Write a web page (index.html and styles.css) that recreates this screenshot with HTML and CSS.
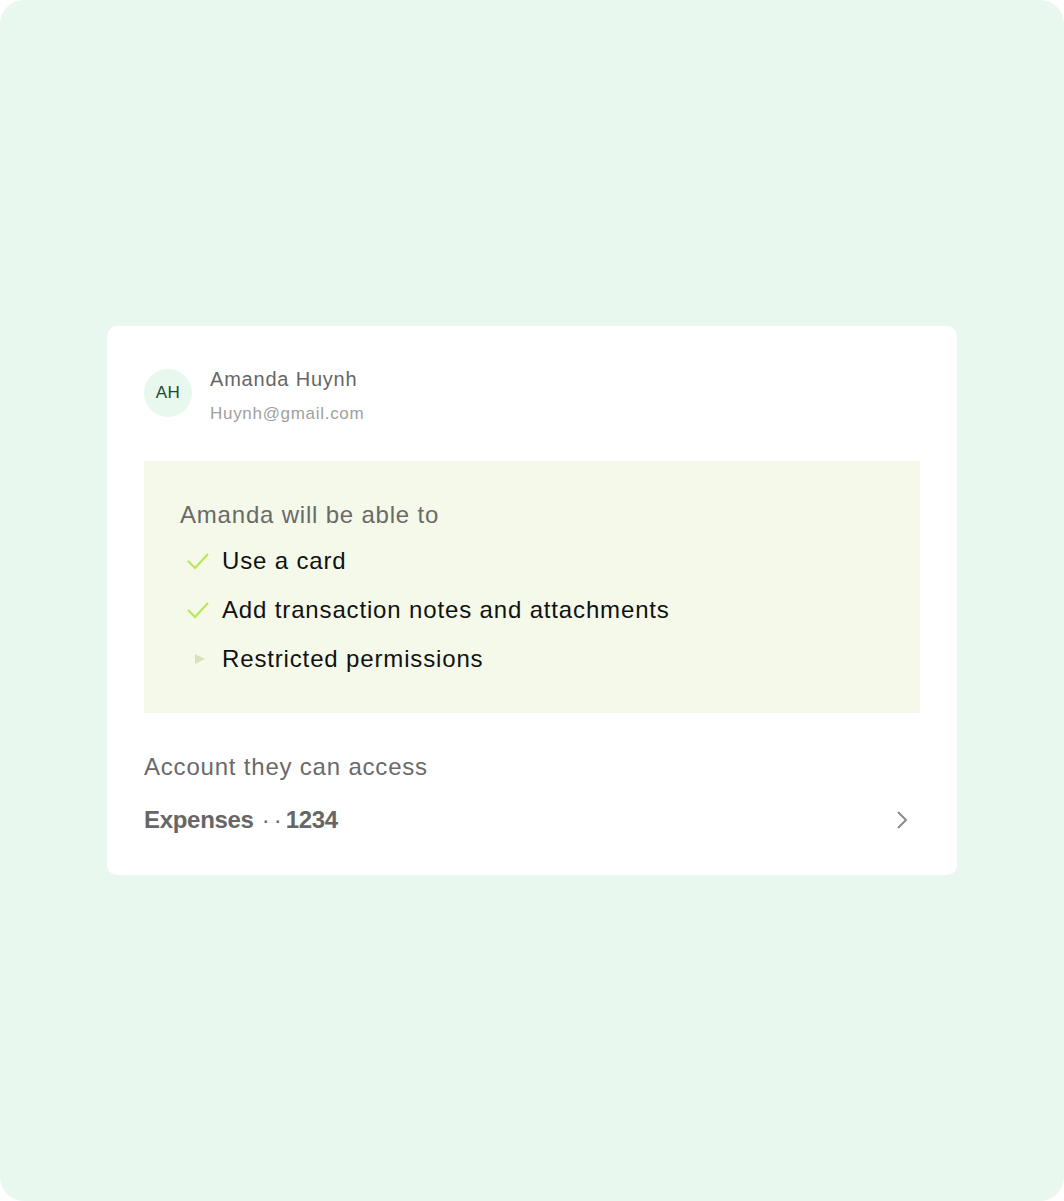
FILE: index.html
```html
<!DOCTYPE html>
<html lang="en">
<head>
    <meta charset="utf-8">
    <meta name="viewport" content="width=device-width, initial-scale=1.0">
    <title>Invite member</title>
    <link rel="stylesheet" href="styles.css">
</head>

<body>
    <main class="stage">
        <section class="card">
            <header class="person">
                <div class="avatar">AH</div>
                <div class="who">
                    <p class="name">Amanda Huynh</p>
                    <p class="email">Huynh@gmail.com</p>
                </div>
            </header>

            <div class="perms">
                <p class="perms-title">Amanda will be able to</p>
                <ul>
                    <li>
                        <svg class="icon" width="24" height="18" viewBox="0 0 24 18"><path d="M2 9 L9 16 L22 2" fill="none" stroke="#b4e84e" stroke-width="2"/></svg>
                        Use a card
                    </li>
                    <li>
                        <svg class="icon" width="24" height="18" viewBox="0 0 24 18"><path d="M2 9 L9 16 L22 2" fill="none" stroke="#b4e84e" stroke-width="2"/></svg>
                        Add transaction notes and attachments
                    </li>
                    <li>
                        <svg class="icon" width="24" height="18" viewBox="0 0 24 18"><path d="M9 4 L19 9 L9 14 Z" fill="#d6e2bd"/></svg>
                        Restricted permissions
                    </li>
                </ul>
            </div>

            <p class="label">Account they can access</p>
            <div class="account">
                <span>Expenses<span class="dots">··</span>1234</span>
                <svg width="12" height="20" viewBox="0 0 12 20"><path d="M2 2 L10 10 L2 18" fill="none" stroke="#8a8a8a" stroke-width="2"/></svg>
            </div>
        </section>
    </main>
</body>
</html>
```

FILE: styles.css
```css
* {
    box-sizing: border-box;
}

body {
    margin: 0;
    background-color: #ffffff;
    font-family: 'Liberation Sans', Arial, sans-serif;
}

.stage {
    width: 1064px;
    height: 1201px;
    background-color: #e8f8ee;
    border-radius: 24px;
    display: flex;
    align-items: center;
    justify-content: center;
}

.card {
    width: 850px;
    background-color: #ffffff;
    border-radius: 10px;
    padding: 41px 37px 41px 37px;
}

p {
    margin: 0;
}

.person {
    display: flex;
    align-items: flex-start;
    gap: 18px;
}

.avatar {
    width: 48px;
    height: 48px;
    border-radius: 50%;
    background-color: #e8f8ee;
    color: #1d4a2c;
    font-size: 17px;
    letter-spacing: 0.5px;
    display: flex;
    align-items: center;
    justify-content: center;
    margin-top: 2px;
}

.name {
    font-size: 20px;
    line-height: 24px;
    letter-spacing: 0.8px;
    color: #666666;
}

.email {
    font-size: 17px;
    line-height: 20px;
    letter-spacing: 0.7px;
    color: #a0a0a0;
    margin-top: 13px;
}

.perms {
    background-color: #f5f9ea;
    margin-top: 37px;
    padding: 40px 36px 40px 36px;
}

.perms-title {
    font-size: 24px;
    line-height: 28px;
    letter-spacing: 0.8px;
    color: #6a6a6a;
}

ul {
    list-style: none;
    margin: 0;
    padding: 0;
}

li {
    display: flex;
    align-items: center;
    gap: 12px;
    font-size: 24px;
    line-height: 28px;
    letter-spacing: 0.85px;
    color: #111111;
    margin-top: 21px;
    padding-left: 6px;
}

.perms-title + ul li:first-child {
    margin-top: 18px;
}

.label {
    font-size: 24px;
    line-height: 28px;
    letter-spacing: 0.8px;
    color: #6a6a6a;
    margin-top: 40px;
}

.account {
    display: flex;
    justify-content: space-between;
    align-items: center;
    font-size: 24px;
    line-height: 28px;
    font-weight: bold;
    letter-spacing: -0.3px;
    color: #666666;
    margin-top: 25px;
    padding-right: 12px;
}

.dots {
    font-weight: normal;
    letter-spacing: 4px;
    margin-left: 8px;
    color: #666666;
}
```
